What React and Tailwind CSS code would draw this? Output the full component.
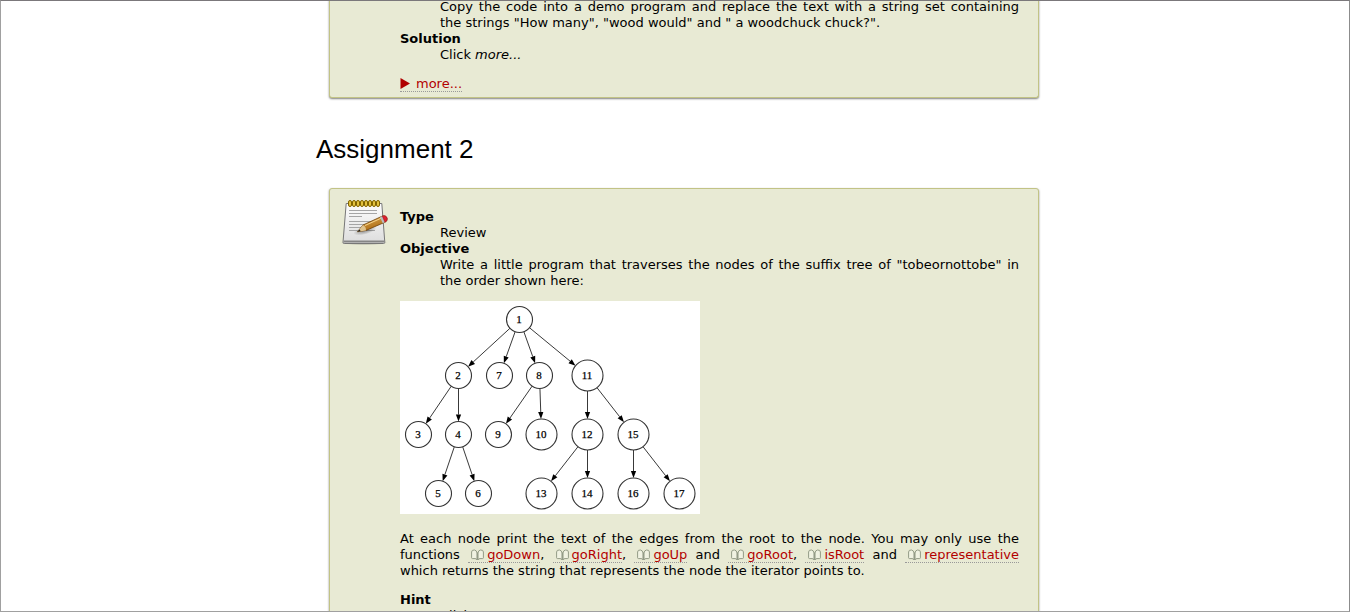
const NODES = [
  ["1", 119, 18], ["2", 58, 74], ["7", 99, 74], ["8", 139, 74], ["11", 187, 74],
  ["3", 18, 133], ["4", 58, 133], ["9", 98, 133], ["10", 141, 133], ["12", 187, 133], ["15", 233, 133],
  ["5", 38, 192], ["6", 78, 192], ["13", 141, 192], ["14", 187, 192], ["16", 233, 192], ["17", 279, 192],
];

const EDGES = [
  ["1", "2"], ["1", "7"], ["1", "8"], ["1", "11"], ["2", "3"], ["2", "4"], ["4", "5"], ["4", "6"],
  ["8", "9"], ["8", "10"], ["11", "12"], ["11", "15"], ["12", "13"], ["12", "14"], ["15", "16"], ["15", "17"],
];

const radius = (label) => (label.length > 1 ? 15.5 : 13);
const find = (label) => NODES.find((n) => n[0] === label);

function Edge({ from, to }) {
  const [, x1, y1] = find(from);
  const [, x2, y2] = find(to);
  const length = Math.hypot(x2 - x1, y2 - y1);
  const ux = (x2 - x1) / length;
  const uy = (y2 - y1) / length;
  const tipX = x2 - ux * radius(to);
  const tipY = y2 - uy * radius(to);
  const baseX = tipX - ux * 7;
  const baseY = tipY - uy * 7;
  return (
    <g>
      <line x1={x1 + ux * radius(from)} y1={y1 + uy * radius(from)} x2={baseX} y2={baseY} stroke="#222" strokeWidth="0.9" />
      <polygon points={`${tipX},${tipY} ${baseX - uy * 2.6},${baseY + ux * 2.6} ${baseX + uy * 2.6},${baseY - ux * 2.6}`} fill="#000" />
    </g>
  );
}

function SuffixTree() {
  return (
    <svg role="img" aria-label="Suffix tree traversal order" viewBox="0 0 300 213" className="block h-[213px] w-[300px] bg-white">
      <g transform="translate(0.5 0.5)">
        {EDGES.map(([a, b]) => <Edge key={a + b} from={a} to={b} />)}
        {NODES.map(([label, x, y]) => (
          <g key={label}>
            <circle cx={x} cy={y} r={radius(label)} fill="#fff" stroke="#333" strokeWidth="1.1" />
            <text x={x - 0.5} y={y + 3} textAnchor="middle" className="font-['Liberation_Serif',serif] text-[11px]" fill="#000" stroke="#000" strokeWidth="0.25">{label}</text>
          </g>
        ))}
      </g>
    </svg>
  );
}

function NotepadIcon() {
  return (
    <svg viewBox="0 0 48 48" className="block size-12 shrink-0" aria-hidden="true">
      <defs>
        <linearGradient id="paper" x1="0" y1="0" x2="0" y2="1">
          <stop offset="0" stopColor="#fdfdfd" />
          <stop offset="1" stopColor="#dcdcdc" />
        </linearGradient>
        <linearGradient id="wood" x1="0" y1="0" x2="0.5" y2="1">
          <stop offset="0" stopColor="#e3b15a" />
          <stop offset="1" stopColor="#a8660f" />
        </linearGradient>
        <radialGradient id="shade">
          <stop offset="0" stopColor="#000" stopOpacity="0.4" />
          <stop offset="1" stopColor="#000" stopOpacity="0" />
        </radialGradient>
      </defs>
      <ellipse cx="23" cy="44.5" rx="24" ry="3" fill="url(#shade)" />
      <path d="M5.2 5.5H40.8L43.8 44.3Q43.9 45.5 42.5 45.5H3.2Q1.8 45.5 2 44.2Z" fill="url(#paper)" stroke="#777" />
      <path d="M2.8 42.5H43.2L43.5 44.5H2.5Z" fill="#858585" />
      <path d="M6.3 7H39.8" stroke="#fff" />
      <path d="M8 12.5H36M8 15.5H36M8 18.5H21M8 23.5H36M8 26.5H26M8 29.5H22M8 32.5H34" stroke="#a5a5a5" />
      <ellipse cx="24" cy="32.5" rx="12" ry="4" fill="url(#shade)" transform="rotate(-15 24 32.5)" />
      {[8, 12, 16, 20, 24, 28, 32, 36].map((x) => (
        <rect key={x} x={x - 0.5} y="2.5" width="3" height="6" rx="1.5" fill="#e4c341" stroke="#826500" />
      ))}
      <path d="M16.5 33.8L22 27L41.5 18Q44.8 17 46 20Q46.7 22.5 44.5 24L25 32.4Z" fill="url(#wood)" stroke="#70430d" strokeWidth="0.8" />
      <path d="M16.5 33.8L22 27Q25 28.5 25 32.4Z" fill="#dfc28c" />
      <path d="M16.3 33.9L18.3 31.4Q19.5 32 19.5 33.3Z" fill="#222" />
      <path d="M24 27.5L41 19.8" stroke="#f7d58c" strokeWidth="1" />
      <path d="M39 19.2L41.5 18L44.2 24L41.8 25.2Z" fill="#b9bdc2" />
      <path d="M41.3 18.1Q45 16.8 46.1 20Q46.8 22.8 44 24.2Z" fill="#df2230" stroke="#a51620" strokeWidth="0.6" />
    </svg>
  );
}

function BookIcon() {
  return (
    <svg viewBox="0 0 13 12" className="mr-[3px] ml-[3px] inline-block h-3 w-[13px] align-[-2px]" fill="#f0f2e2" stroke="#939b86" aria-hidden="true">
      <path d="M3.5 1Q.6 .8 .6 3V8.8Q.6 9.6 1.6 9.6H4Q5.6 9.6 6.1 11V4Q5.5 1.2 3.5 1Z" />
      <path d="M9.5 1Q12.4 .8 12.4 3V8.8Q12.4 9.6 11.4 9.6H9Q7.4 9.6 6.9 11V4Q7.5 1.2 9.5 1Z" />
      <path d="M6.5 3.5V11" strokeWidth="1.4" />
    </svg>
  );
}

const LINK = "border-b border-dotted border-[#999] text-[#b30000]";

function DocLink({ name }) {
  return <a href={`#${name}`} className={`${LINK} whitespace-nowrap`}><BookIcon />{name}</a>;
}

const CARD = "ml-[18px] rounded-[3px] border border-[#c2c386] bg-[#e8ead4] pr-[19px] pb-[5px] shadow-[0_1px_2px_rgba(0,0,0,0.5)]";

export default function App() {
  return (
    <div className="h-screen overflow-hidden border border-t-[#7b787b] border-r-[#8c8c8c] border-b-[#a0a0a0] border-l-[#a0a0a0] bg-white">
      <main className="mx-auto max-w-[728px] font-['DejaVu_Sans',Verdana,sans-serif] text-[13px] leading-4 text-black">
        <section className={`${CARD} -mt-0.5 rounded-t-none border-t-0 pl-[70px]`}>
          <dl>
            <dd className="ml-10 text-justify">
              Copy the code into a demo program and replace the text with a string set containing the{"\u00a0"}strings "How many", "wood would" and " a woodchuck chuck?".
            </dd>
            <dt className="font-bold">Solution</dt>
            <dd className="ml-10">Click <em>more...</em></dd>
          </dl>
          <p className="mt-[13px]">
            <a href="#more" className={LINK}>
              <svg viewBox="0 0 10 11" className="mr-1.5 inline-block h-[11px] w-2.5 align-[-1px]" aria-hidden="true">
                <path d="M0.5 0L10 5.5L0.5 11Z" fill="#b00000" />
              </svg>
              more...
            </a>
          </p>
        </section>

        <h2 className="mt-9 mb-6 pl-[5px] font-['Liberation_Sans',Arial,sans-serif] text-[26px] leading-[30px]">Assignment 2</h2>

        <section className={`${CARD} flex gap-[11px] pl-[11px]`}>
          <div className="pt-[9px]"><NotepadIcon /></div>
          <div className="min-w-0 flex-1 pt-5">
            <dl>
              <dt className="font-bold">Type</dt>
              <dd className="ml-10">Review</dd>
              <dt className="font-bold">Objective</dt>
              <dd className="ml-10 text-justify">
                Write a little program that traverses the nodes of the suffix tree of "tobeornottobe" in the order shown here:
              </dd>
            </dl>
            <div className="mt-3"><SuffixTree /></div>
            <p className="mt-[17px] text-justify">
              At each node print the text of the edges from the root to the node. You may only use the functions{" "}
              <DocLink name="goDown" />, <DocLink name="goRight" />, <DocLink name="goUp" /> and{" "}
              <DocLink name="goRoot" />, <DocLink name="isRoot" /> and <DocLink name="representative" />{" "}
              which returns the string that represents the node the iterator points to.
            </p>
            <dl className="mt-[13px]">
              <dt className="font-bold">Hint</dt>
              <dd className="ml-10">Click <em>more...</em></dd>
            </dl>
          </div>
        </section>
      </main>
    </div>
  );
}
